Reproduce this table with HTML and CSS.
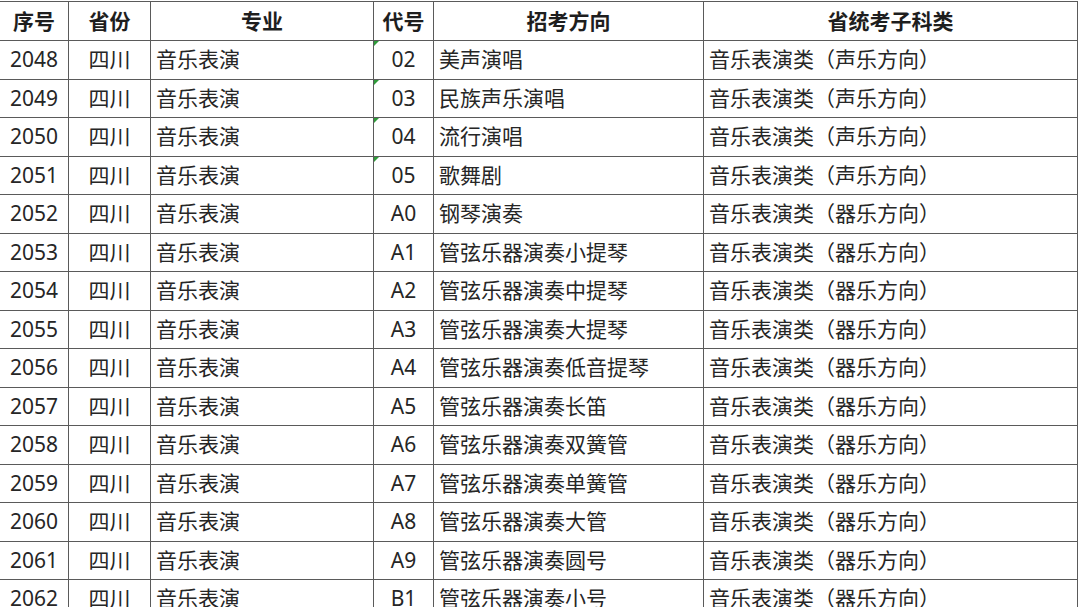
FILE: index.html
```html
<!DOCTYPE html>
<html lang="zh">
<head>
<meta charset="utf-8">
<title>招考专业表</title>
<link rel="stylesheet" href="styles.css">
</head>
<body>
<table class="grid">
  <colgroup>
    <col class="c1"><col class="c2"><col class="c3"><col class="c4"><col class="c5"><col class="c6">
  </colgroup>
  <thead>
    <tr><th>序号</th><th>省份</th><th>专业</th><th>代号</th><th>招考方向</th><th>省统考子科类</th></tr>
  </thead>
  <tbody>
    <tr><td class="ctr">2048</td><td class="ctr">四川</td><td class="lft">音乐表演</td><td class="ctr mark">02</td><td class="lft">美声演唱</td><td class="lft">音乐表演类（声乐方向）</td></tr>
    <tr><td class="ctr">2049</td><td class="ctr">四川</td><td class="lft">音乐表演</td><td class="ctr mark">03</td><td class="lft">民族声乐演唱</td><td class="lft">音乐表演类（声乐方向）</td></tr>
    <tr><td class="ctr">2050</td><td class="ctr">四川</td><td class="lft">音乐表演</td><td class="ctr mark">04</td><td class="lft">流行演唱</td><td class="lft">音乐表演类（声乐方向）</td></tr>
    <tr><td class="ctr">2051</td><td class="ctr">四川</td><td class="lft">音乐表演</td><td class="ctr mark">05</td><td class="lft">歌舞剧</td><td class="lft">音乐表演类（声乐方向）</td></tr>
    <tr><td class="ctr">2052</td><td class="ctr">四川</td><td class="lft">音乐表演</td><td class="ctr">A0</td><td class="lft">钢琴演奏</td><td class="lft">音乐表演类（器乐方向）</td></tr>
    <tr><td class="ctr">2053</td><td class="ctr">四川</td><td class="lft">音乐表演</td><td class="ctr">A1</td><td class="lft">管弦乐器演奏小提琴</td><td class="lft">音乐表演类（器乐方向）</td></tr>
    <tr><td class="ctr">2054</td><td class="ctr">四川</td><td class="lft">音乐表演</td><td class="ctr">A2</td><td class="lft">管弦乐器演奏中提琴</td><td class="lft">音乐表演类（器乐方向）</td></tr>
    <tr><td class="ctr">2055</td><td class="ctr">四川</td><td class="lft">音乐表演</td><td class="ctr">A3</td><td class="lft">管弦乐器演奏大提琴</td><td class="lft">音乐表演类（器乐方向）</td></tr>
    <tr><td class="ctr">2056</td><td class="ctr">四川</td><td class="lft">音乐表演</td><td class="ctr">A4</td><td class="lft">管弦乐器演奏低音提琴</td><td class="lft">音乐表演类（器乐方向）</td></tr>
    <tr><td class="ctr">2057</td><td class="ctr">四川</td><td class="lft">音乐表演</td><td class="ctr">A5</td><td class="lft">管弦乐器演奏长笛</td><td class="lft">音乐表演类（器乐方向）</td></tr>
    <tr><td class="ctr">2058</td><td class="ctr">四川</td><td class="lft">音乐表演</td><td class="ctr">A6</td><td class="lft">管弦乐器演奏双簧管</td><td class="lft">音乐表演类（器乐方向）</td></tr>
    <tr><td class="ctr">2059</td><td class="ctr">四川</td><td class="lft">音乐表演</td><td class="ctr">A7</td><td class="lft">管弦乐器演奏单簧管</td><td class="lft">音乐表演类（器乐方向）</td></tr>
    <tr><td class="ctr">2060</td><td class="ctr">四川</td><td class="lft">音乐表演</td><td class="ctr">A8</td><td class="lft">管弦乐器演奏大管</td><td class="lft">音乐表演类（器乐方向）</td></tr>
    <tr><td class="ctr">2061</td><td class="ctr">四川</td><td class="lft">音乐表演</td><td class="ctr">A9</td><td class="lft">管弦乐器演奏圆号</td><td class="lft">音乐表演类（器乐方向）</td></tr>
    <tr><td class="ctr">2062</td><td class="ctr">四川</td><td class="lft">音乐表演</td><td class="ctr">B1</td><td class="lft">管弦乐器演奏小号</td><td class="lft">音乐表演类（器乐方向）</td></tr>
  </tbody>
</table>
</body>
</html>
```
FILE: styles.css
```css
html, body {
  margin: 0;
  padding: 0;
  background: #ffffff;
  overflow: hidden;
}
body {
  font-family: "Noto Sans", "Noto Sans CJK SC", sans-serif;
  color: #262626;
}
.grid {
  border-collapse: collapse;
  table-layout: fixed;
  width: 1078px;
  margin: 1px 0 0 -1px;
  font-size: 21px;
}
.c1 { width: 69px; }
.c2 { width: 82px; }
.c3 { width: 223px; }
.c4 { width: 60px; }
.c5 { width: 270px; }
.c6 { width: 374px; }
.grid th, .grid td {
  border: 1px solid #5a5a5a;
  padding: 0;
  line-height: 1;
  white-space: nowrap;
  overflow: hidden;
}
.grid th {
  height: 38px;
  font-weight: 700;
  text-align: center;
  color: #1e1e1e;
}
.grid td {
  height: 37.5px;
}
.ctr { text-align: center; }
.lft { text-align: left; padding-left: 5px !important; }
.mark { position: relative; }
.mark::before {
  content: "";
  position: absolute;
  left: 0;
  top: 0;
  width: 0;
  height: 0;
  border-top: 5px solid #2f9b3a;
  border-right: 5px solid transparent;
}
```
